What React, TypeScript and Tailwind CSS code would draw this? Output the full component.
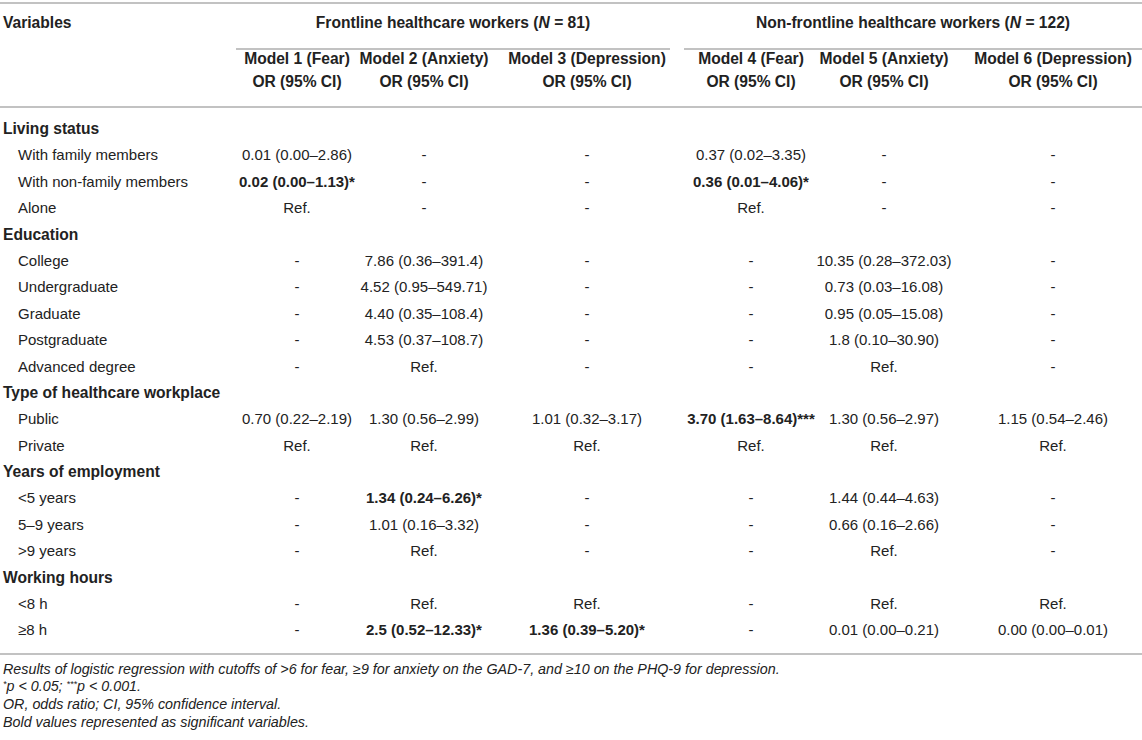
import React from 'react';

type Cell = string | { b: string };

interface RowData {
  label: string;
  cells?: Cell[];
}

const rows: RowData[] = [
  { label: 'Living status' },
  { label: 'With family members', cells: ['0.01 (0.00–2.86)', '-', '-', '0.37 (0.02–3.35)', '-', '-'] },
  { label: 'With non-family members', cells: [{ b: '0.02 (0.00–1.13)*' }, '-', '-', { b: '0.36 (0.01–4.06)*' }, '-', '-'] },
  { label: 'Alone', cells: ['Ref.', '-', '-', 'Ref.', '-', '-'] },
  { label: 'Education' },
  { label: 'College', cells: ['-', '7.86 (0.36–391.4)', '-', '-', '10.35 (0.28–372.03)', '-'] },
  { label: 'Undergraduate', cells: ['-', '4.52 (0.95–549.71)', '-', '-', '0.73 (0.03–16.08)', '-'] },
  { label: 'Graduate', cells: ['-', '4.40 (0.35–108.4)', '-', '-', '0.95 (0.05–15.08)', '-'] },
  { label: 'Postgraduate', cells: ['-', '4.53 (0.37–108.7)', '-', '-', '1.8 (0.10–30.90)', '-'] },
  { label: 'Advanced degree', cells: ['-', 'Ref.', '-', '-', 'Ref.', '-'] },
  { label: 'Type of healthcare workplace' },
  {
    label: 'Public',
    cells: ['0.70 (0.22–2.19)', '1.30 (0.56–2.99)', '1.01 (0.32–3.17)', { b: '3.70 (1.63–8.64)***' }, '1.30 (0.56–2.97)', '1.15 (0.54–2.46)'],
  },
  { label: 'Private', cells: ['Ref.', 'Ref.', 'Ref.', 'Ref.', 'Ref.', 'Ref.'] },
  { label: 'Years of employment' },
  { label: '<5 years', cells: ['-', { b: '1.34 (0.24–6.26)*' }, '-', '-', '1.44 (0.44–4.63)', '-'] },
  { label: '5–9 years', cells: ['-', '1.01 (0.16–3.32)', '-', '-', '0.66 (0.16–2.66)', '-'] },
  { label: '>9 years', cells: ['-', 'Ref.', '-', '-', 'Ref.', '-'] },
  { label: 'Working hours' },
  { label: '<8 h', cells: ['-', 'Ref.', 'Ref.', '-', 'Ref.', 'Ref.'] },
  { label: '≥8 h', cells: ['-', { b: '2.5 (0.52–12.33)*' }, { b: '1.36 (0.39–5.20)*' }, '-', '0.01 (0.00–0.21)', '0.00 (0.00–0.01)'] },
];

const models = ['Model 1 (Fear)', 'Model 2 (Anxiety)', 'Model 3 (Depression)', 'Model 4 (Fear)', 'Model 5 (Anxiety)', 'Model 6 (Depression)'];

const GRID = 'grid grid-cols-[236px_122px_132px_194px_134px_132px_192px]';

const Rule = () => <div className="h-[2px] w-full bg-[#c2c2c2]" />;

const ValueCell = ({ value, last }: { value: Cell; last: boolean }) => (
  <div className={`flex justify-center whitespace-nowrap ${last ? 'pl-[14px]' : ''}`}>
    {typeof value === 'string' ? <span>{value}</span> : <span className="font-bold">{value.b}</span>}
  </div>
);

export default function App() {
  return (
    <div className="w-[1142px] h-[740px] bg-white text-[#222] text-[15px] font-['Liberation_Sans',Arial,sans-serif] overflow-hidden">
      <div className="pt-[2px]">
        <Rule />
      </div>

      {/* group header */}
      <div className={`${GRID} h-[44px] pt-[6px] leading-[26px] font-bold text-[15.6px]`}>
        <div className="pl-[3px]">Variables</div>
        <div className="col-span-3 flex flex-col items-center mr-[14px]">
          <span>
            Frontline healthcare workers (<i>N</i> = 81)
          </span>
        </div>
        <div className="col-span-3 flex flex-col items-center">
          <span>
            Non-frontline healthcare workers (<i>N</i> = 122)
          </span>
        </div>
      </div>
      <div className={GRID}>
        <div />
        <div className="col-span-3 mr-[14px] h-[2px] bg-[#c2c2c2]" />
        <div className="col-span-3 h-[2px] bg-[#c2c2c2]" />
      </div>

      {/* model header */}
      <div className={`${GRID} font-bold text-[15.6px] leading-[18px] pb-[15px]`}>
        <div />
        {models.map((m, i) => (
          <div key={m} className={`flex flex-col items-center whitespace-nowrap ${i === 5 ? 'pl-[14px]' : ''}`}>
            <span>{m}</span>
            <span className="mt-[5px]">OR (95% CI)</span>
          </div>
        ))}
      </div>
      <Rule />

      {/* body */}
      <div className="pt-[8px] pb-[9px]">
        {rows.map((r) => (
          <div key={r.label} className={`${GRID} h-[26.4px] leading-[26.4px]`}>
            {r.cells ? (
              <>
                <div className="pl-[18px] whitespace-nowrap">{r.label}</div>
                {r.cells.map((c, i) => (
                  <ValueCell key={i} value={c} last={i === 5} />
                ))}
              </>
            ) : (
              <div className="pl-[3px] font-bold text-[15.6px] whitespace-nowrap col-span-7">{r.label}</div>
            )}
          </div>
        ))}
      </div>
      <Rule />

      {/* notes */}
      <div className="mt-[6px] pl-[3px] italic text-[14.3px] leading-[17.6px]">
        <p>
          Results of logistic regression with cutoffs of &gt;6 for fear, ≥9 for anxiety on the GAD-7, and ≥10 on the PHQ-9 for
          depression.
        </p>
        <p>
          <sup className="text-[9px]">*</sup>p &lt; 0.05; <sup className="text-[9px]">***</sup>p &lt; 0.001.
        </p>
        <p>OR, odds ratio; CI, 95% confidence interval.</p>
        <p>Bold values represented as significant variables.</p>
      </div>
    </div>
  );
}
